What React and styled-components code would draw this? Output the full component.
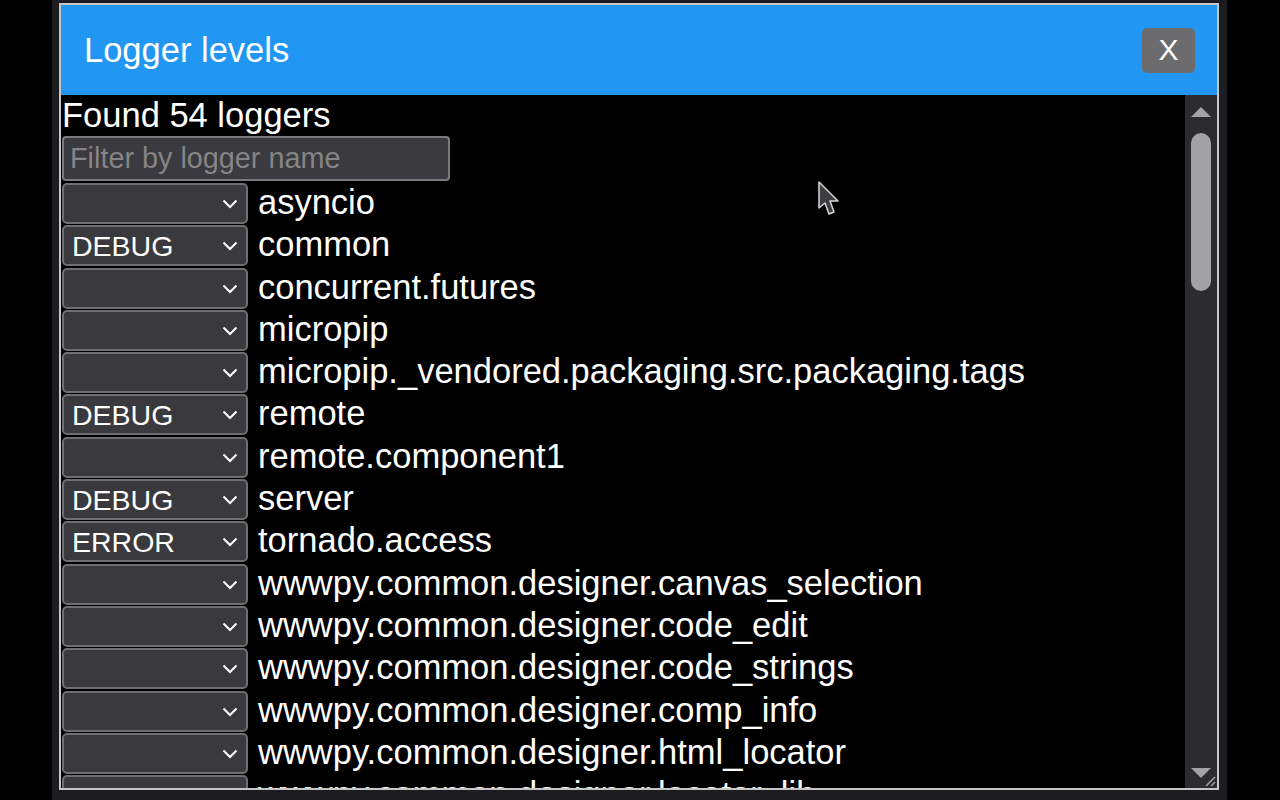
import React, { useState } from "react";
import styled, { createGlobalStyle } from "styled-components";

const GlobalStyle = createGlobalStyle`
  html, body {
    margin: 0;
    padding: 0;
    background: #000;
    font-family: "Liberation Sans", Arial, sans-serif;
  }
`

const Backdrop = styled.div`
  width: 1175px;
  height: 800px;
  margin-left: 52px;
  background: #1d1c21;
  display: flex;
  padding: 3px 0 0 7px;
  box-sizing: border-box;
  overflow: hidden;
`
const Dialog = styled.div`
  width: 1160px;
  height: 787px;
  box-sizing: border-box;
  border: 2px solid #c6c6c6;
  background: #000;
  display: flex;
  flex-direction: column;
  position: relative;
`
const Header = styled.div`
  height: 90px;
  flex-shrink: 0;
  background: #2196f3;
  display: flex;
  align-items: center;
  justify-content: space-between;
  padding: 0 22px 0 23px;
`
const Title = styled.h1`
  margin: 0;
  font-size: 34.5px;
  font-weight: 400;
  color: #fff;
`
const CloseButton = styled.button`
  width: 53px;
  height: 45px;
  border: none;
  border-radius: 5px;
  background: #6c6b6e;
  color: #fff;
  font-family: "Liberation Sans", Arial, sans-serif;
  font-size: 30px;
  cursor: pointer;
  padding: 0;
`
const Body = styled.div`
  flex: 1;
  display: flex;
  min-height: 0;
`
const List = styled.div`
  flex: 1;
  overflow: hidden;
  color: #fff;
`
const Found = styled.div`
  height: 41px;
  line-height: 41px;
  font-size: 34.5px;
  padding-left: 1px;
`
const FilterInput = styled.input`
  display: block;
  width: 388px;
  height: 45px;
  box-sizing: border-box;
  margin-left: 1px;
  border: 2px solid #7b7a7d;
  border-radius: 4px;
  background: #3b3a3e;
  color: #fff;
  font-family: "Liberation Sans", Arial, sans-serif;
  font-size: 28.8px;
  padding: 0 6px;
  outline: none;
  &::placeholder {
    color: #858487;
  }
`
const Rows = styled.div`
  padding-top: 2px;
`
const Row = styled.div`
  height: 42.3px;
  display: flex;
  align-items: flex-start;
  gap: 10px;
  padding-left: 1px;
`
const SelectWrap = styled.div`
  position: relative;
  width: 186px;
  height: 41px;
  flex-shrink: 0;
`
const Select = styled.select`
  appearance: none;
  width: 100%;
  height: 100%;
  box-sizing: border-box;
  border: 2px solid #6f6e71;
  border-radius: 5px;
  background: #3a393d;
  color: #fff;
  font-family: "Liberation Sans", Arial, sans-serif;
  font-size: 28.5px;
  padding: 0 0 0 8px;
  outline: none;
`
const Chevron = styled.svg`
  position: absolute;
  right: 10px;
  top: 16px;
  pointer-events: none;
`
const Name = styled.span`
  font-size: 34.5px;
  line-height: 38px;
  white-space: nowrap;
`
const Scrollbar = styled.div`
  width: 32px;
  flex-shrink: 0;
  background: #2c2b2f;
  display: flex;
  flex-direction: column;
  align-items: center;
  padding: 12px 0 10px;
  box-sizing: border-box;
`
const Thumb = styled.div`
  width: 20px;
  height: 158px;
  border-radius: 10px;
  background: #a3a2a6;
  margin-top: 16px;
`
const Spacer = styled.div`
  flex: 1;
`
const Resize = styled.svg`
  position: absolute;
  right: 1px;
  bottom: 1px;
`
const Cursor = styled.svg`
  position: absolute;
  left: 756px;
  top: 175px;
  pointer-events: none;
`

const LEVELS = ["", "DEBUG", "INFO", "WARNING", "ERROR", "CRITICAL"]

const initialLoggers = [
  ["asyncio", ""],
  ["common", "DEBUG"],
  ["concurrent.futures", ""],
  ["micropip", ""],
  ["micropip._vendored.packaging.src.packaging.tags", ""],
  ["remote", "DEBUG"],
  ["remote.component1", ""],
  ["server", "DEBUG"],
  ["tornado.access", "ERROR"],
  ["wwwpy.common.designer.canvas_selection", ""],
  ["wwwpy.common.designer.code_edit", ""],
  ["wwwpy.common.designer.code_strings", ""],
  ["wwwpy.common.designer.comp_info", ""],
  ["wwwpy.common.designer.html_locator", ""],
  ["wwwpy.common.designer.locator_lib", ""],
  ["wwwpy.common.designer.log_emit", ""],
  ["wwwpy.common.rpc", ""],
]

function App() {
  const [filter, setFilter] = useState("")
  const [loggers, setLoggers] = useState(initialLoggers)

  const setLevel = (name, level) => {
    setLoggers(loggers.map(l => (l[0] === name ? [name, level] : l)))
  }

  const shown = loggers.filter(l => l[0].includes(filter))

  return (
    <>
      <GlobalStyle />
      <Backdrop>
        <Dialog>
          <Header>
            <Title>Logger levels</Title>
            <CloseButton>X</CloseButton>
          </Header>
          <Body>
            <List>
              <Found>Found 54 loggers</Found>
              <FilterInput
                placeholder="Filter by logger name"
                value={filter}
                onChange={e => setFilter(e.target.value)}
              />
              <Rows>
                {shown.map(([name, level]) => (
                  <Row key={name}>
                    <SelectWrap>
                      <Select value={level} onChange={e => setLevel(name, e.target.value)}>
                        {LEVELS.map(lv => <option key={lv} value={lv}>{lv}</option>)}
                      </Select>
                      <Chevron width="16" height="10" viewBox="0 0 16 10">
                        <path d="M1.5 1.5 L8 8 L14.5 1.5" fill="none" stroke="#fff" strokeWidth="2" />
                      </Chevron>
                    </SelectWrap>
                    <Name>{name}</Name>
                  </Row>
                ))}
              </Rows>
            </List>
            <Scrollbar>
              <svg width="20" height="10" viewBox="0 0 20 10">
                <polygon points="10,0 20,10 0,10" fill="#a3a2a6" />
              </svg>
              <Thumb />
              <Spacer />
              <svg width="20" height="10" viewBox="0 0 20 10">
                <polygon points="0,0 20,0 10,10" fill="#a3a2a6" />
              </svg>
            </Scrollbar>
          </Body>
          <Resize width="12" height="12" viewBox="0 0 12 12">
            <path d="M11 2 L2 11 M11 7 L7 11" stroke="#a3a2a6" strokeWidth="1.5" />
          </Resize>
          <Cursor width="26" height="38" viewBox="0 0 26 38">
            <path d="M2 2 L2 28 L8 23 L12 34 L17 32 L13 21 L21 21 Z" fill="#3e3d41" stroke="#d8d8d8" strokeWidth="1.5" strokeLinejoin="round" />
          </Cursor>
        </Dialog>
      </Backdrop>
    </>
  )
}

export default App
